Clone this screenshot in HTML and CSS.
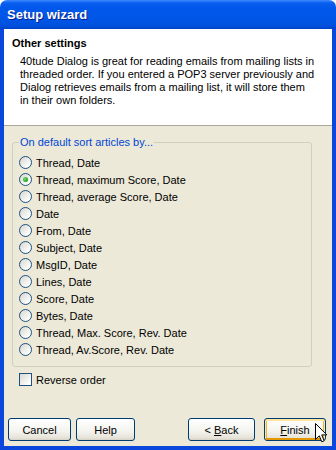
FILE: index.html
```html
<!DOCTYPE html>
<html lang="en">
<head>
    <meta charset="UTF-8">
    <title>Setup wizard</title>
    <link rel="stylesheet" href="styles.css">
</head>
<body>

    <div class="window">
        <div class="titlebar">
            <span class="title">Setup wizard</span>
        </div>

        <div class="frame">
            <div class="intro">
                <h1>Other settings</h1>
                <p>40tude Dialog is great for reading emails from mailing lists in threaded order. If you entered a POP3 server previously and Dialog retrieves emails from a mailing list, it will store them in their own folders.</p>
            </div>

            <div class="content">
                <fieldset class="group">
                    <legend>On default sort articles by...</legend>
                    <div class="option"><span class="radio"></span>Thread, Date</div>
                    <div class="option"><span class="radio checked"></span>Thread, maximum Score, Date</div>
                    <div class="option"><span class="radio"></span>Thread, average Score, Date</div>
                    <div class="option"><span class="radio"></span>Date</div>
                    <div class="option"><span class="radio"></span>From, Date</div>
                    <div class="option"><span class="radio"></span>Subject, Date</div>
                    <div class="option"><span class="radio"></span>MsgID, Date</div>
                    <div class="option"><span class="radio"></span>Lines, Date</div>
                    <div class="option"><span class="radio"></span>Score, Date</div>
                    <div class="option"><span class="radio"></span>Bytes, Date</div>
                    <div class="option"><span class="radio"></span>Thread, Max. Score, Rev. Date</div>
                    <div class="option"><span class="radio"></span>Thread, Av.Score, Rev. Date</div>
                </fieldset>

                <div class="option reverse"><span class="checkbox"></span>Reverse order</div>
            </div>

            <div class="buttons">
                <div class="btn-group">
                    <button class="btn cancel">Cancel</button>
                    <button class="btn help">Help</button>
                </div>
                <div class="btn-group">
                    <button class="btn back">&lt; <u>B</u>ack</button>
                    <button class="btn finish"><u>F</u>inish</button>
                </div>
            </div>
        </div>

        <!-- mouse pointer over the Finish button -->
        <svg class="cursor" width="13" height="21" viewBox="0 0 13 21">
            <path d="M0.5 0.5 L0.5 16.5 L4.3 12.8 L6.8 18.8 L9.2 17.8 L6.7 11.9 L11.8 11.9 Z" fill="#fff" stroke="#000" stroke-width="1" stroke-linejoin="miter"/>
        </svg>
    </div>

</body>
</html>
```

FILE: styles.css
```css
body {
    margin: 0;
    padding: 0;
    background-color: #fff;
    font-family: "Liberation Sans", Arial, sans-serif;
    font-size: 11px;
    color: #000;
}

.window {
    position: relative;
    width: 336px;
    height: 450px;
    display: flex;
    flex-direction: column;
}

.titlebar {
    height: 29px;
    display: flex;
    align-items: center;
    padding-left: 7px;
    border-radius: 7px 7px 0 0;
    background: linear-gradient(#3d8bff 0, #0a5ef0 3px, #0058ea 8px, #0055e5 20px, #0050dc 26px, #0043c8 29px);
}

.title {
    color: #fff;
    font-weight: bold;
    font-size: 13px;
    text-shadow: 1px 1px 0 #0a1f8c;
}

.frame {
    flex: 1;
    display: flex;
    flex-direction: column;
    background-color: #ece9d8;
    border-left: 4px solid #0a47dc;
    border-right: 4px solid #0a47dc;
    border-bottom: 4px solid #0a47dc;
}

.intro {
    height: 97px;
    box-sizing: border-box;
    background-color: #fff;
    padding: 8px 16px 0 8px;
    border-bottom: 1px solid #aca899;
}

.intro h1 {
    margin: 0;
    font-size: 11px;
    font-weight: bold;
    line-height: 13px;
}

.intro p {
    margin: 5px 0 0 8px;
    line-height: 13px;
}

.content {
    padding: 10px 20px 0 8px;
}

.group {
    margin: 0;
    padding: 5px 6px 8px 6px;
    border: 1px solid #d0d0bf;
    border-radius: 3px;
}

.group legend {
    padding: 0 1px;
    color: #0046d5;
    line-height: 13px;
}

.option {
    display: flex;
    align-items: center;
    height: 17px;
    gap: 4px;
}

.radio {
    width: 11px;
    height: 11px;
    border: 1px solid #1c5180;
    border-radius: 50%;
    background: linear-gradient(135deg, #dcdbd4 10%, #ffffff 85%);
    display: flex;
    align-items: center;
    justify-content: center;
}

.radio.checked::after {
    content: "";
    width: 5px;
    height: 5px;
    border-radius: 50%;
    background: radial-gradient(circle at 35% 35%, #6fe06a, #21a121 70%);
}

.reverse {
    margin-top: 4px;
    padding-left: 7px;
}

.checkbox {
    width: 11px;
    height: 11px;
    border: 1px solid #1c5180;
    background: linear-gradient(135deg, #dcdbd4 10%, #ffffff 85%);
}

.buttons {
    margin-top: auto;
    display: flex;
    justify-content: space-between;
    padding: 0 6px 5px 4px;
}

.btn-group {
    display: flex;
    gap: 5px;
}

.btn-group + .btn-group {
    gap: 9px;
}

.btn {
    height: 23px;
    padding: 0;
    font-family: "Liberation Sans", Arial, sans-serif;
    font-size: 11px;
    color: #000;
    border: 1px solid #003c74;
    border-radius: 3px;
    background: linear-gradient(#ffffff, #f3f3ee 60%, #e6e3d8 90%, #d6d0c5);
}

.cancel {
    width: 63px;
}

.help {
    width: 59px;
}

.back {
    width: 67px;
}

.finish {
    width: 62px;
    box-shadow: inset 0 1px 0 1px #ffe7a2, inset 0 -1px 0 1px #e59700, inset 0 0 0 2px #f8b330;
}

.cursor {
    position: absolute;
    left: 315px;
    top: 423px;
}
```
